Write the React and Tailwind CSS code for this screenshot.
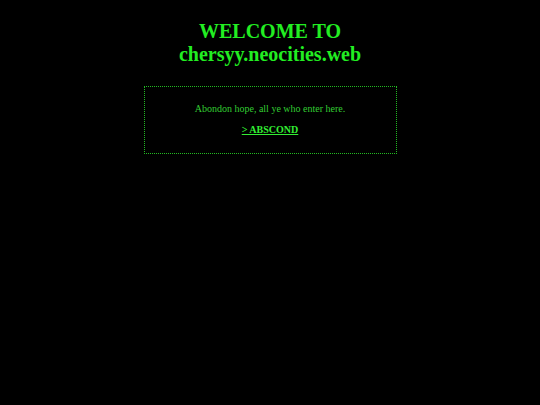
export default function App() {
  return (
    <div className="min-h-screen w-full bg-black text-[#22ee22]" style={{ fontFamily: '"Liberation Serif", "Times New Roman", serif' }}>
      <div className="flex flex-col items-center pt-[20px]">
        <h1 className="text-center text-[20px] font-bold leading-[23px] text-[#22ee22]">
          WELCOME TO
          <br />
          chersyy.neocities.web
        </h1>
        <div className="mt-[20px] flex h-[68px] w-[253px] flex-col items-center border border-dotted border-[#22bb22] pt-[16px]">
          <p className="text-[10px] leading-[12px] text-[#33cc33]">Abondon hope, all ye who enter here.</p>
          <a href="#" className="mt-[9px] text-[10px] font-bold leading-[12px] text-[#33ee33] underline">
            &gt; ABSCOND
          </a>
        </div>
      </div>
    </div>
  );
}
